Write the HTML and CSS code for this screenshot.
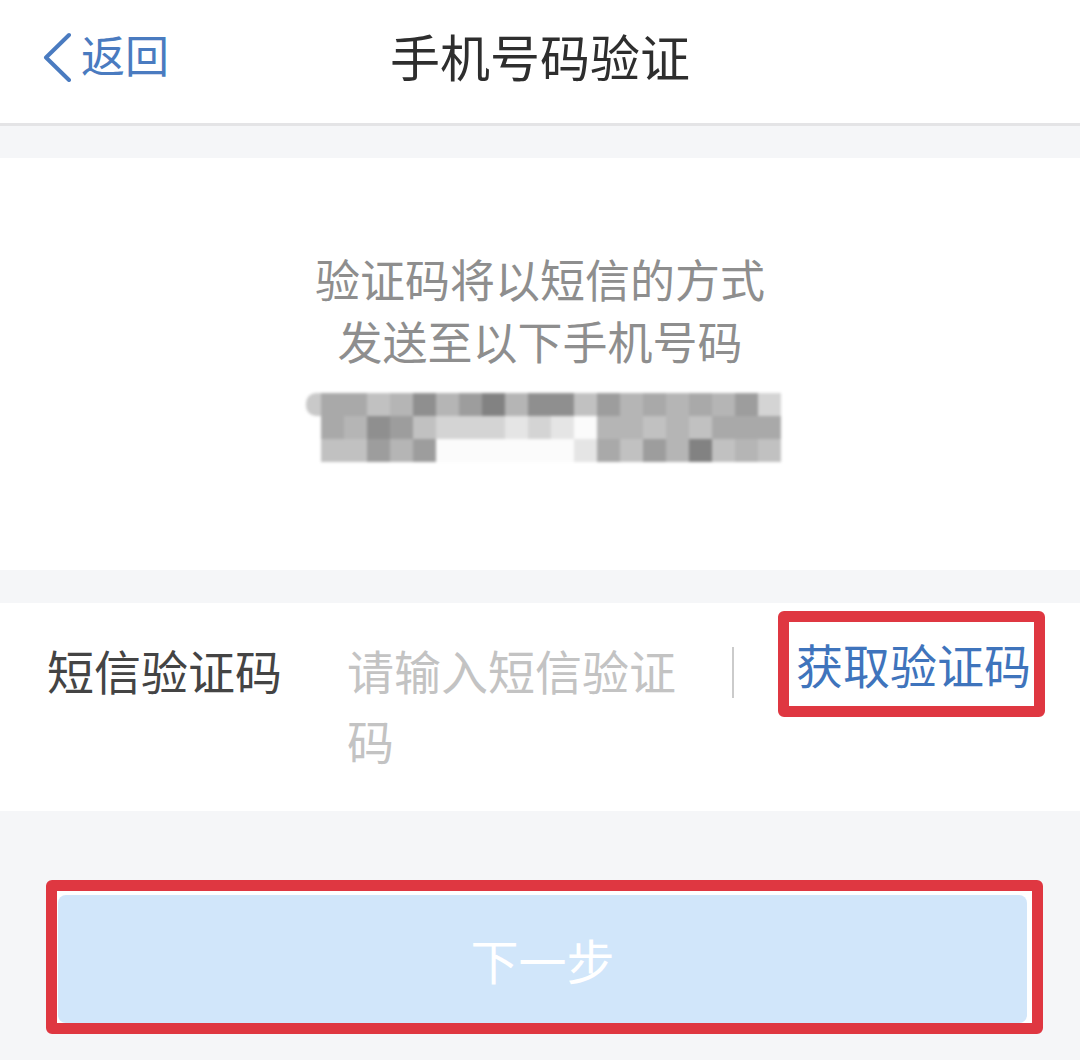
FILE: index.html
```html
<!DOCTYPE html>
<html lang="zh-CN">

<head>
    <meta charset="UTF-8">
    <meta name="viewport" content="width=device-width, initial-scale=1.0">
    <title>手机号码验证</title>
    <link rel="stylesheet" href="styles.css">
</head>

<body>

    <header class="top-bar">
        <a class="back-link" href="#">
            <svg class="back-icon" width="30" height="50" viewBox="0 0 30 50">
                <path d="M26 3 L3 25.5 L26 48" fill="none" stroke="#4a7bc0" stroke-width="4" stroke-linecap="round" stroke-linejoin="round" />
            </svg>
            <span>返回</span>
        </a>
        <h1 class="page-title">手机号码验证</h1>
        <div></div>
    </header>

    <section class="info-block">
        <p class="info-text">验证码将以短信的方式<br>发送至以下手机号码</p>
        <div class="phone-mask">
            <i class="s-edge"></i><i class="s4"></i><i class="s4"></i><i class="s6"></i><i class="s5"></i><i class="s2"></i><i class="s5"></i><i class="s3"></i><i class="s1"></i><i class="s5"></i><i class="s2"></i><i class="s2"></i><i class="s6"></i><i class="s3"></i><i class="s5"></i><i class="s4"></i><i class="s5"></i><i class="s4"></i><i class="s5"></i><i class="s3"></i><i class="s7"></i>
            <i></i><i class="s4"></i><i class="s5"></i><i class="s2"></i><i class="s3"></i><i class="s6"></i><i class="s7"></i><i class="s7"></i><i class="s7"></i><i class="s8"></i><i class="s7"></i><i class="s8"></i><i class="s9"></i><i class="s5"></i><i class="s5"></i><i class="s6"></i><i class="s5"></i><i class="s6"></i><i class="s4"></i><i class="s4"></i><i class="s4"></i>
            <i></i><i class="s6"></i><i class="s6"></i><i class="s3"></i><i class="s5"></i><i class="s3"></i><i class="s9"></i><i class="s9"></i><i class="s9"></i><i class="s9"></i><i class="s9"></i><i class="s9"></i><i class="s8"></i><i class="s4"></i><i class="s6"></i><i class="s3"></i><i class="s5"></i><i class="s1"></i><i class="s6"></i><i class="s5"></i><i class="s6"></i>
        </div>
    </section>

    <section class="field-row">
        <label class="field-label" for="smsCode">短信验证码</label>
        <div class="field-input" id="smsCode">请输入短信验证码</div>
        <span class="field-divider"></span>
        <div class="mark-box mark-small">
            <a class="get-code" href="#">获取验证码</a>
        </div>
    </section>

    <div class="mark-box mark-wide">
        <button class="next-button" type="button">下一步</button>
    </div>

</body>

</html>
```

FILE: styles.css
```css
body {
    margin: 0;
    background: #f5f6f8;
    font-family: "Noto Sans CJK SC", "Noto Sans", sans-serif;
}

.top-bar {
    display: grid;
    grid-template-columns: 1fr auto 1fr;
    align-items: center;
    height: 123px;
    background: #fff;
    border-bottom: 3px solid #e4e4e6;
}

.back-link {
    display: flex;
    align-items: center;
    gap: 8px;
    padding: 0 0 10px 43px;
    color: #4a7bc0;
    font-size: 44px;
    text-decoration: none;
}

.back-link span {
    margin-top: -6px;
}

.back-icon {
    display: block;
}

.page-title {
    margin: 0;
    color: #2e2e2e;
    font-size: 50px;
    font-weight: 400;
    line-height: 1;
    padding-bottom: 14px;
}

.info-block {
    margin-top: 32px;
    padding: 90px 0 108px;
    background: #fff;
}

.info-text {
    margin: 0;
    color: #8e8e8e;
    font-size: 45px;
    line-height: 62px;
    text-align: center;
}

.phone-mask {
    display: grid;
    grid-template-columns: 15px repeat(20, 23px);
    grid-auto-rows: 23px;
    width: 475px;
    margin: 21px 0 0 306px;
    filter: blur(1.5px);
}

.phone-mask i {
    display: block;
}

.phone-mask .s-edge {
    background: #c9c9c9;
    border-radius: 10px 0 0 10px;
}

.s1 { background: #828282; }
.s2 { background: #8f8f8f; }
.s3 { background: #9d9d9d; }
.s4 { background: #a9a9a9; }
.s5 { background: #b5b5b5; }
.s6 { background: #c1c1c1; }
.s7 { background: #d4d4d4; }
.s8 { background: #e5e5e5; }
.s9 { background: #fbfbfb; }

.field-row {
    display: flex;
    align-items: flex-start;
    margin-top: 33px;
    padding: 8px 35px 36px 47px;
    background: #fff;
}

.field-label {
    flex-shrink: 0;
    width: 300px;
    margin-top: 24px;
    color: #444;
    font-size: 47px;
    line-height: 70px;
}

.field-input {
    flex-shrink: 0;
    width: 340px;
    margin-top: 24px;
    color: #c3c3c3;
    font-size: 47px;
    line-height: 70px;
}

.field-divider {
    flex-shrink: 0;
    width: 2px;
    height: 51px;
    margin: 36px 0 0 45px;
    background: #cbcbcb;
}

.mark-box {
    border: 11px solid #df3741;
    border-radius: 6px;
    background: #fff;
}

.mark-small {
    flex-shrink: 0;
    margin-left: 44px;
    padding: 0 3px 0 7px;
}

.get-code {
    display: block;
    color: #3f74bc;
    font-size: 47px;
    line-height: 84px;
    white-space: nowrap;
    text-decoration: none;
}

.mark-wide {
    margin: 69px 37px 0 46px;
    padding: 4px 5px 0 1px;
}

.next-button {
    display: block;
    width: 100%;
    height: 128px;
    border: none;
    border-radius: 8px;
    background: #d1e6fa;
    color: #fff;
    font-family: inherit;
    font-size: 48px;
}
```
